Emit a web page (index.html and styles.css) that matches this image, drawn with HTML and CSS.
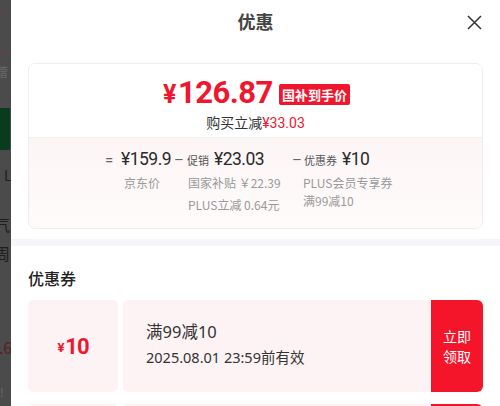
FILE: index.html
```html
<!DOCTYPE html>
<html lang="zh-CN">
<head>
  <meta charset="UTF-8" />
  <meta name="viewport" content="width=device-width, initial-scale=1.0"/>
  <title>优惠</title>
  <link rel="stylesheet" href="styles.css">
</head>
<body>

  <!-- 背景页（被遮罩） -->
  <div class="backdrop">
    <div class="bd-line bd-line1"></div>
    <div class="bd-line bd-line2"></div>
    <div class="bd-text bd-t1">蓿</div>
    <div class="bd-green"></div>
    <div class="bd-text bd-t2">L</div>
    <div class="bd-text bd-t3">气</div>
    <div class="bd-text bd-t4">周</div>
    <div class="bd-text bd-t5">0.6</div>
    <div class="bd-text bd-t6">!</div>
  </div>

  <div class="sheet">
    <div class="sheet-header">
      <h1>优惠</h1>
      <span class="close">
        <svg width="15" height="15" viewBox="0 0 15 15"><path d="M1 1 L14 14 M14 1 L1 14" stroke="#333" stroke-width="1.5" fill="none"/></svg>
      </span>
    </div>

    <div class="price-card">
      <div class="price-top">
        <div class="final">
          <span class="final-price"><small>¥</small>126.87</span>
          <span class="tag">国补到手价</span>
        </div>
        <div class="save">购买立减<span class="red">¥33.03</span></div>
      </div>
      <div class="price-detail">
        <div class="col col-jd">
          <div class="col-main"><span class="op">=</span>¥159.9</div>
          <div class="col-sub">京东价</div>
        </div>
        <div class="col col-promo">
          <div class="col-main"><span class="op">–</span><span class="lbl">促销</span>¥23.03</div>
          <div class="col-sub">国家补贴 ￥22.39</div>
          <div class="col-sub">PLUS立减 0.64元</div>
        </div>
        <div class="col col-coupon">
          <div class="col-main"><span class="op">–</span><span class="lbl">优惠券</span>¥10</div>
          <div class="col-sub">PLUS会员专享券</div>
          <div class="col-sub">满99减10</div>
        </div>
      </div>
    </div>

    <div class="divider"></div>

    <h2>优惠券</h2>

    <div class="coupon">
      <div class="coupon-amount"><small>¥</small>10</div>
      <div class="coupon-info">
        <div class="coupon-title">满99减10</div>
        <div class="coupon-date">2025.08.01 23:59前有效</div>
      </div>
      <div class="coupon-btn">立即<br>领取</div>
    </div>

    <div class="coupon">
      <div class="coupon-amount"></div>
      <div class="coupon-info"></div>
      <div class="coupon-btn"></div>
    </div>
  </div>

</body>
</html>
```

FILE: styles.css
```css
html, body {
  margin: 0;
  padding: 0;
  height: 100%;
  overflow: hidden;
  font-family: "Noto Sans CJK SC", "Noto Sans", sans-serif;
  color: #333;
}

body {
  display: flex;
  background-color: #4b4b4b;
}

.backdrop {
  width: 11px;
  flex-shrink: 0;
  position: relative;
  overflow: hidden;
}

.bd-line {
  position: absolute;
  left: 0;
  width: 11px;
  height: 1px;
  background: #6b3a40;
}
.bd-line1 { top: 13px; }
.bd-line2 { top: 53px; }

.bd-green {
  position: absolute;
  left: 0;
  top: 108px;
  width: 10px;
  height: 42px;
  background: #0b3b1d;
}

.bd-text {
  position: absolute;
  left: -6px;
  color: #1e1e1e;
  font-size: 16px;
  line-height: 1;
}
.bd-t1 { top: 66px; color: #6a6a6a; font-size: 12px; left: -4px; }
.bd-t2 { top: 168px; left: 4px; font-size: 14px; }
.bd-t3 { top: 216px; }
.bd-t4 { top: 245px; }
.bd-t5 { top: 339px; left: -10px; color: #5a1e22; }
.bd-t6 { top: 386px; left: 0; color: #6a6a6a; font-size: 12px; }

.sheet {
  flex: 1;
  background: #fff;
  padding: 0 17px;
}

.sheet-header {
  height: 42px;
  display: flex;
  align-items: center;
  justify-content: center;
  position: relative;
}

.sheet-header h1 {
  margin: 0;
  font-size: 18px;
  font-weight: bold;
  color: #444;
}

.close {
  position: absolute;
  right: 1px;
  top: 15px;
  line-height: 0;
}

.price-card {
  margin-top: 21px;
  border: 1px solid #f0eded;
  border-radius: 7px;
  overflow: hidden;
}

.price-top {
  padding: 13px 0 5px;
  text-align: center;
  background: #fff;
  border-bottom: 1px solid #f6eff0;
}

.final {
  height: 34px;
  display: flex;
  justify-content: center;
  align-items: center;
  gap: 6px;
  padding-left: 2px;
}

.final-price {
  color: #f0162d;
  font-family: Roboto, "Noto Sans", sans-serif;
  font-weight: bold;
  font-size: 31px;
  line-height: 34px;
  letter-spacing: -0.5px;
}

.final-price small {
  font-size: 25px;
  margin-right: 2px;
}

.tag {
  background: #f0162d;
  color: #fff;
  font-size: 13px;
  font-weight: bold;
  line-height: 21px;
  padding: 0 3px;
  border-radius: 2px;
}

.save {
  height: 20px;
  font-size: 14px;
  line-height: 20px;
  margin-top: 1px;
  overflow: hidden;
}

.red {
  color: #f0162d;
  font-family: Roboto, "Noto Sans", sans-serif;
}

.price-detail {
  background: linear-gradient(#fcf5f6, #fffbfb);
  display: flex;
  padding: 8px 0 12px 76px;
}

.col {
  display: flex;
  flex-direction: column;
}

.col-main {
  height: 26px;
  font-family: Roboto, "Noto Sans", sans-serif;
  font-size: 17.5px;
  letter-spacing: -0.5px;
  line-height: 26px;
  color: #2a2a2a;
  display: flex;
  align-items: baseline;
}

.col-main .op {
  color: #666;
  font-size: 15px;
  width: 13px;
}

.col-main .lbl {
  font-family: "Noto Sans CJK SC", sans-serif;
  font-size: 11px;
  letter-spacing: 0;
  color: #555;
  margin-right: 5px;
}

.col-sub {
  height: 22px;
  font-size: 12px;
  color: #999;
  line-height: 22px;
  padding-left: 14px;
}

.col-jd { width: 69px; }
.col-jd .op { width: 16px; }
.col-jd .col-sub { padding-left: 19px; }
.col-promo { width: 118px; }
.col-coupon .op { width: 12px; }
.col-coupon .col-sub { padding-left: 11px; height: 18px; line-height: 18px; }
.col-coupon .col-sub:nth-child(2) { margin-top: 2px; }

.divider {
  height: 7px;
  background: #f5f6fa;
  margin: 10px -17px 0;
}

h2 {
  margin: 21px 0 11px;
  font-size: 16px;
  font-weight: 500;
  color: #222;
  line-height: 22px;
  height: 22px;
}

.coupon {
  display: flex;
  height: 92px;
  margin-bottom: 12px;
}

.coupon-amount {
  width: 90px;
  background: #fdf3f4;
  border-radius: 5px;
  margin-right: 5px;
  display: flex;
  align-items: center;
  justify-content: center;
  color: #f0162d;
  font-family: Roboto, "Noto Sans", sans-serif;
  font-weight: bold;
  font-size: 22px;
  letter-spacing: -1px;
}

.coupon-amount small {
  font-size: 13px;
  margin-right: 2px;
  margin-top: 3px;
}

.coupon-info {
  flex: 1;
  background: #fdf3f4;
  border-radius: 5px 0 0 5px;
  padding: 20px 0 0 23px;
}

.coupon-title {
  height: 24px;
  font-family: "Noto Sans", "Noto Sans CJK SC", sans-serif;
  font-size: 16.5px;
  line-height: 24px;
  color: #333;
}

.coupon-date {
  height: 22px;
  font-family: "Noto Sans", "Noto Sans CJK SC", sans-serif;
  font-size: 14.5px;
  line-height: 22px;
  color: #333;
  margin-top: 2px;
}

.coupon-btn {
  width: 52px;
  background: #f5152b;
  border-radius: 0 6px 6px 0;
  color: #fff;
  font-size: 14px;
  line-height: 20px;
  display: flex;
  align-items: center;
  justify-content: center;
  text-align: center;
}
```
